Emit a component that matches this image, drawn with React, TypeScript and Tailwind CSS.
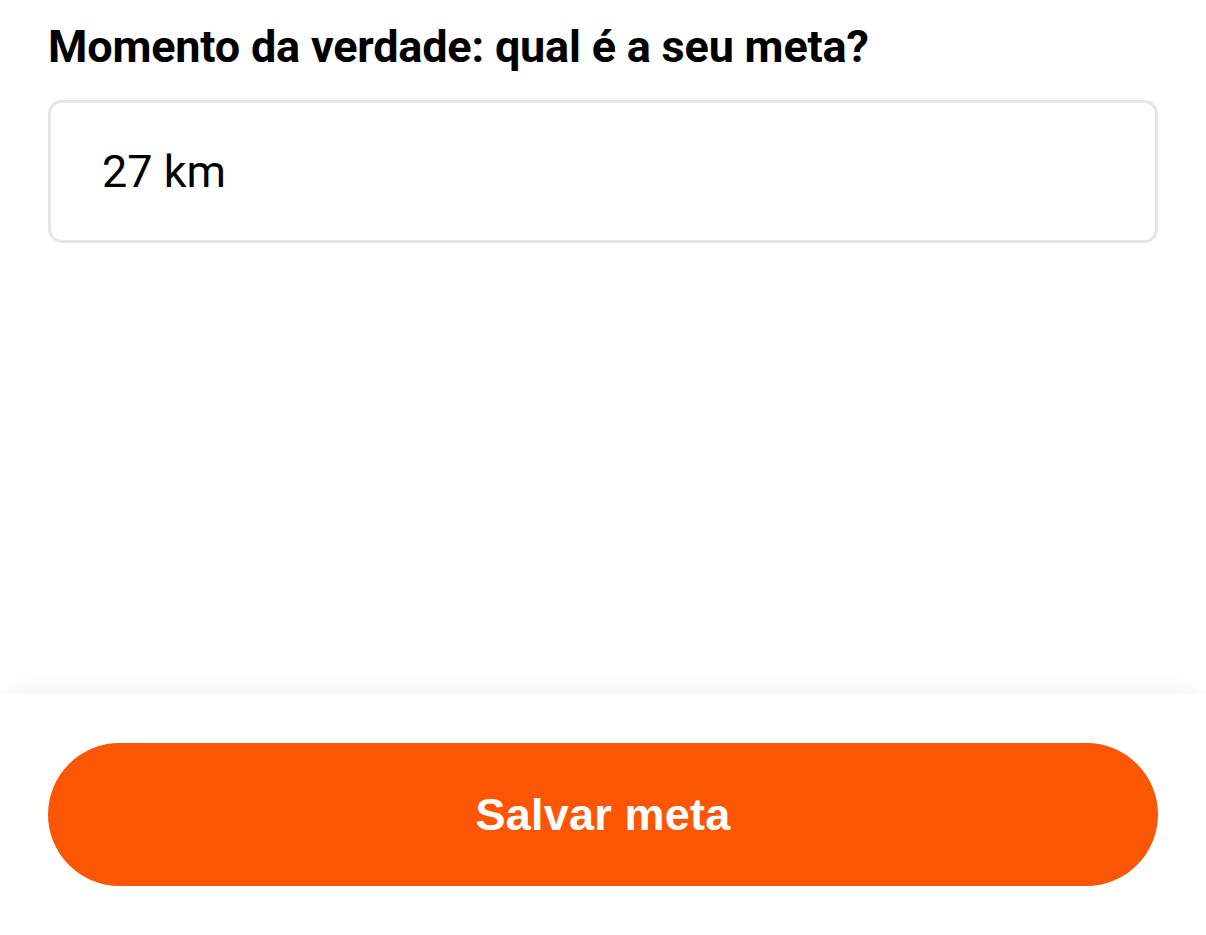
export default function App() {
  return (
    <div
      className="w-[1206px] h-[935px] bg-white flex flex-col"
      style={{ fontFamily: "Roboto, 'Liberation Sans', sans-serif" }}
    >
      {/* Goal form */}
      <section className="flex-1 px-[48px] pt-[23px]">
        <h1 className="text-[45px] leading-[48px] font-bold tracking-[-0.2px] text-black">
          Momento da verdade: qual é a seu meta?
        </h1>
        <div className="mt-[29px] h-[143px] rounded-[14px] border-[3px] border-[#e6e6e3] flex items-center pl-[51px]">
          <span className="text-[45px] text-black leading-none">27 km</span>
        </div>
      </section>

      {/* Bottom action bar */}
      <div className="h-[241px] bg-white shadow-[0_-14px_24px_-10px_rgba(0,0,0,0.06)] px-[48px] pt-[49px]">
        <button className="w-full h-[143px] rounded-full bg-[#fc5605] text-white text-[45px] font-bold font-['Liberation_Sans',Arial,sans-serif] tracking-[0.2px]">
          Salvar meta
        </button>
      </div>
    </div>
  );
}
